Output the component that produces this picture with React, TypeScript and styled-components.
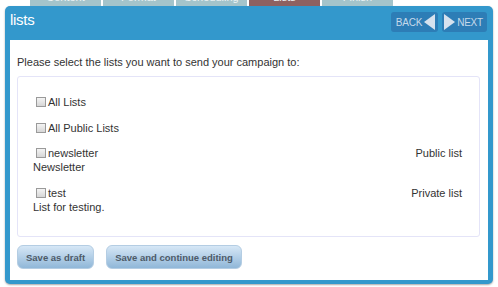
import React from "react";
import styled, { createGlobalStyle } from "styled-components";

const Global = createGlobalStyle`
  html, body { margin: 0; padding: 0; background: #ffffff; overflow: hidden; }
  body { font-family: "Liberation Sans", Arial, sans-serif; }
`;

const Page = styled.div`
  width: 498px;
  height: 287px;
  overflow: hidden;
  position: relative;
`;

const TabRow = styled.div`
  display: flex;
  gap: 2px;
  margin: -14px 0 0 30px;
`;

const Tab = styled.div<{ $active?: boolean }>`
  width: 71px;
  height: 20px;
  box-sizing: border-box;
  padding-top: 4px;
  font-size: 11px;
  line-height: 14px;
  text-align: center;
  color: #eef4f6;
  background: ${(p) => (p.$active ? "#8e6160" : "#a4c4cb")};
  border-radius: 4px 4px 0 0;
`;

const Panel = styled.div`
  margin-left: 5px;
  width: 488px;
  box-sizing: border-box;
  background: #3398cc;
  border-radius: 5px;
  padding: 0 5px 4px 5px;
  box-shadow: 0 1px 2px rgba(0, 0, 0, 0.35);
`;

const Header = styled.div`
  height: 34px;
  display: flex;
  justify-content: space-between;
  align-items: flex-start;
  padding-right: 1px;
`;

const Title = styled.h1`
  margin: 5px 0 0 0;
  font-size: 15px;
  line-height: 18px;
  font-weight: normal;
  color: #ffffff;
  letter-spacing: -0.3px;
`;

const NavGroup = styled.div`
  display: flex;
  gap: 4px;
  margin-top: 6px;
`;

const NavButton = styled.div<{ $pad: string }>`
  height: 20px;
  box-sizing: border-box;
  display: flex;
  align-items: center;
  gap: 2px;
  padding: ${(p) => p.$pad};
  background: #2d7db6;
  border-radius: 3px;
  color: #c6d9ea;
  font-size: 10px;
  letter-spacing: -0.2px;
`;

const Body = styled.div`
  background: #ffffff;
  padding: 15px 8px 11px 7px;
`;

const Intro = styled.p`
  margin: 0 0 7px 0;
  font-size: 11px;
  line-height: 14px;
  color: #333333;
`;

const ListBox = styled.div`
  border: 1px solid #e4e4f8;
  border-radius: 3px;
  padding: 18px 17px 22px 15px;
  display: flex;
  flex-direction: column;
  gap: 11.5px;
  box-sizing: border-box;
  height: 161px;
`;

const Item = styled.div`
  font-size: 11px;
  line-height: 14px;
  color: #333333;
`;

const ItemRow = styled.div`
  display: flex;
  justify-content: space-between;
  align-items: center;
`;

const Label = styled.label`
  display: flex;
  align-items: center;
`;

const Check = styled.input`
  appearance: none;
  -webkit-appearance: none;
  width: 10px;
  height: 10px;
  margin: 0 2px 0 3px;
  border: 1px solid #9a9a9a;
  background: linear-gradient(#f4f4f4, #d6d6d6);
  box-sizing: border-box;
`;

const Kind = styled.span`
  color: #333333;
`;

const Actions = styled.div`
  display: flex;
  gap: 12px;
  margin-top: 8px;
`;

const ActionButton = styled.button`
  height: 24px;
  padding: 0 8px;
  border: 1px solid #b4cde3;
  border-radius: 6px;
  background: linear-gradient(#d6e7f6, #90b7d8);
  font-family: "Liberation Sans", Arial, sans-serif;
  font-weight: bold;
  font-size: 9.5px;
  color: #4d5a68;
  cursor: pointer;
`;

const TriLeft = () => (
  <svg width="12" height="16" viewBox="0 0 12 16">
    <polygon points="11,0 11,16 0,8" fill="#d6e2ee" />
  </svg>
);

const TriRight = () => (
  <svg width="11" height="16" viewBox="0 0 11 16">
    <polygon points="0,0 0,16 11,8" fill="#d6e2ee" />
  </svg>
);

const lists = [
  { name: "newsletter", desc: "Newsletter", kind: "Public list" },
  { name: "test", desc: "List for testing.", kind: "Private list" },
];

export default function App() {
  return (
    <Page>
      <Global />
      <TabRow>
        <Tab>Content</Tab>
        <Tab>Format</Tab>
        <Tab>Scheduling</Tab>
        <Tab $active>Lists</Tab>
        <Tab>Finish</Tab>
      </TabRow>
      <Panel>
        <Header>
          <Title>lists</Title>
          <NavGroup>
            <NavButton $pad="0 2px 0 5px">
              BACK <TriLeft />
            </NavButton>
            <NavButton $pad="0 4px 0 2px">
              <TriRight /> NEXT
            </NavButton>
          </NavGroup>
        </Header>
        <Body>
          <Intro>Please select the lists you want to send your campaign to:</Intro>
          <ListBox>
            <Item>
              <Label>
                <Check type="checkbox" />
                All Lists
              </Label>
            </Item>
            <Item>
              <Label>
                <Check type="checkbox" />
                All Public Lists
              </Label>
            </Item>
            {lists.map((l) => (
              <Item key={l.name}>
                <ItemRow>
                  <Label>
                    <Check type="checkbox" />
                    {l.name}
                  </Label>
                  <Kind>{l.kind}</Kind>
                </ItemRow>
                <div>{l.desc}</div>
              </Item>
            ))}
          </ListBox>
          <Actions>
            <ActionButton>Save as draft</ActionButton>
            <ActionButton>Save and continue editing</ActionButton>
          </Actions>
        </Body>
      </Panel>
    </Page>
  );
}
